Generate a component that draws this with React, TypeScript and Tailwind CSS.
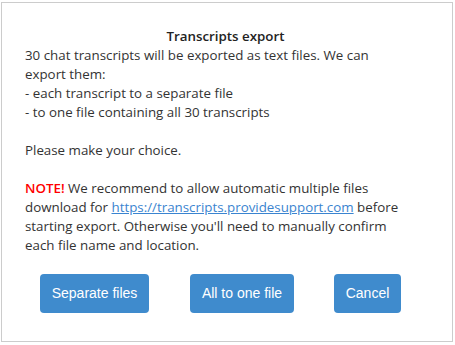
import React from "react";

export default function App() {
  return (
    <div className="w-[455px] h-[345px] bg-white">
      <div className="ml-[1px] mt-[2px] w-[452px] h-[340px] border border-[#cccccc] flex flex-col pl-[23px] pr-[40px] pt-[24px] text-[#333333] text-[13.33px] leading-[19px]" style={{ fontFamily: '"Open Sans", sans-serif' }}>
        <div className="text-center font-semibold text-[#222222] pl-[14px]">Transcripts export</div>
        <div>30 chat transcripts will be exported as text files. We can export them:</div>
        <div>- each transcript to a separate file</div>
        <div>- to one file containing all 30 transcripts</div>
        <div className="h-[19px]" />
        <div>Please make your choice.</div>
        <div className="h-[19px]" />
        <div>
          <span className="text-[#ff0000] font-semibold">NOTE!</span> We recommend to allow automatic multiple files download for{" "}
          <a className="text-[#3a84d0] underline" href="#">https://transcripts.providesupport.com</a> before starting export. Otherwise you'll need to manually confirm each file name and location.
        </div>
        <div className="flex mt-[19px] pl-[15px] gap-[41px]" style={{ fontFamily: '"Liberation Sans", Arial, sans-serif' }}>
          <button className="h-[39px] w-[109px] rounded-[4px] bg-[#3f8bcd] text-white text-[14px]">Separate files</button>
          <button className="h-[39px] w-[104px] rounded-[4px] bg-[#3f8bcd] text-white text-[14px]">All to one file</button>
          <button className="h-[39px] w-[67px] rounded-[4px] bg-[#3f8bcd] text-white text-[14px] -ml-[1px]">Cancel</button>
        </div>
      </div>
    </div>
  );
}
